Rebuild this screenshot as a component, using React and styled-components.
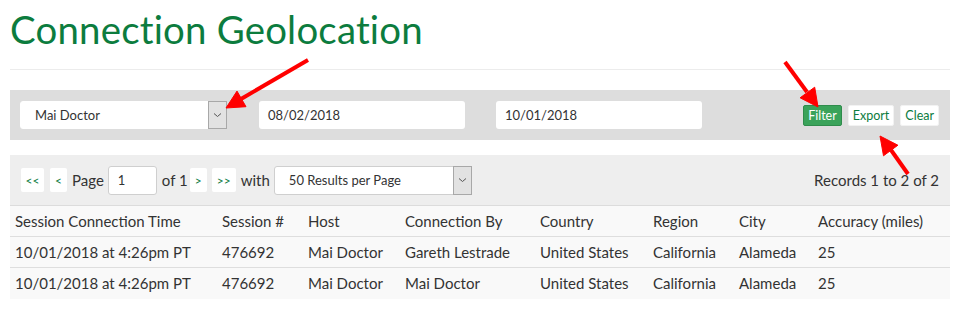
import React from "react";
import styled, { createGlobalStyle } from "styled-components";

const Global = createGlobalStyle`
  html, body { margin: 0; padding: 0; background: #fff; }
  body { font-family: Lato, "Open Sans", sans-serif; color: #333; }
`;

const Page = styled.div`
  position: relative;
  width: 965px;
  height: 319px;
  padding: 0 15px 0 10px;
  box-sizing: border-box;
`;

const Title = styled.h1`
  margin: 7px 0 0;
  font-family: Lato, sans-serif;
  font-weight: 400;
  font-size: 38.4px;
  line-height: 44px;
  color: #0c7c3e;
  letter-spacing: 0.2px;
`;

const Rule = styled.hr`
  margin: 18px 0 0;
  border: 0;
  border-top: 1px solid #ececec;
  height: 0;
`;

const FilterBar = styled.div`
  margin-top: 20px;
  height: 50px;
  background: #dddddd;
  display: flex;
  align-items: center;
  padding: 0 11px 0 10px;
  box-sizing: border-box;
`;

const SelectBox = styled.div`
  position: relative;
  display: flex;
  align-items: stretch;
  width: ${(p) => p.$w}px;
  height: ${(p) => p.$h}px;
  background: #fff;
  border: 1px solid ${(p) => p.$border || "#fff"};
  border-radius: 3px;
  box-sizing: border-box;
  font-size: 13px;
  color: #333;
`;

const SelectText = styled.div`
  flex: 1;
  display: flex;
  align-items: center;
  padding-left: ${(p) => p.$pad}px;
`;

const Caret = styled.div`
  width: 17px;
  background: #e2e2e2;
  border: 1px solid #a8a8a8;
  margin: -1px -1px -1px 0;
  display: flex;
  align-items: center;
  justify-content: center;
`;

const DateInput = styled.div`
  width: 206px;
  height: 28px;
  margin-left: ${(p) => p.$ml}px;
  background: #fff;
  border-radius: 3px;
  box-sizing: border-box;
  padding-left: 9px;
  display: flex;
  align-items: center;
  font-size: 13px;
  color: #333;
`;

const Buttons = styled.div`
  margin-left: auto;
  display: flex;
  gap: 6px;
`;

const Btn = styled.div`
  height: 21px;
  padding: 0 4px;
  box-sizing: border-box;
  display: flex;
  align-items: center;
  font-size: 12.5px;
  border-radius: 2px;
  background: ${(p) => (p.$primary ? "#3aa35a" : "#fff")};
  color: ${(p) => (p.$primary ? "#fff" : "#0c7c3e")};
  border: 1px solid ${(p) => (p.$primary ? "#2f8c4c" : "#f2f2f2")};
`;

const PagerBar = styled.div`
  margin-top: 15px;
  height: 51px;
  background: #eeeeee;
  border-bottom: 1px solid #dcdcdc;
  box-sizing: border-box;
  display: flex;
  align-items: center;
  padding: 0 11px 0 11px;
  font-size: 15px;
  color: #333;
`;

const PgBtn = styled.div`
  width: ${(p) => p.$w}px;
  height: 24px;
  background: #fff;
  border-radius: 2px;
  display: flex;
  align-items: center;
  justify-content: center;
  color: #0c7c3e;
  font-size: 12px;
  margin-left: ${(p) => p.$ml || 0}px;
`;

const Label = styled.span`
  margin: 0 ${(p) => p.$mr}px 0 ${(p) => p.$ml}px;
`;

const PageInput = styled.div`
  width: 49px;
  height: 29px;
  background: #fff;
  border: 1px solid #cfcfcf;
  border-radius: 3px;
  box-sizing: border-box;
  padding-left: 9px;
  display: flex;
  align-items: center;
  font-size: 13px;
`;

const Records = styled.div`
  margin-left: auto;
`;

const Table = styled.table`
  width: 940px;
  border-collapse: collapse;
  background: #f9f9f9;
  font-size: 15px;
  color: #333;
  table-layout: fixed;
`;

const Th = styled.th`
  text-align: left;
  font-weight: 400;
  height: 30px;
  padding: 0 0 0 5px;
  border-bottom: 1px solid #dedede;
  width: ${(p) => p.$w - 5}px;
`;

const Td = styled.td`
  height: 30px;
  padding: 0 0 0 5px;
  border-bottom: 1px solid ${(p) => (p.$last ? "transparent" : "#dedede")};
  white-space: nowrap;
`;

const Overlay = styled.svg`
  position: absolute;
  left: 0;
  top: 0;
  pointer-events: none;
`;

const CaretIcon = () => (
  <svg width="9" height="6" viewBox="0 0 9 6">
    <path d="M1 1.5 L4.5 4.5 L8 1.5" fill="none" stroke="#555" strokeWidth="1" />
  </svg>
);

const cols = [
  ["Session Connection Time", 207],
  ["Session #", 86],
  ["Host", 97],
  ["Connection By", 135],
  ["Country", 113],
  ["Region", 86],
  ["City", 79],
  ["Accuracy (miles)", 137],
];

const rows = [
  ["10/01/2018 at 4:26pm PT", "476692", "Mai Doctor", "Gareth Lestrade", "United States", "California", "Alameda", "25"],
  ["10/01/2018 at 4:26pm PT", "476692", "Mai Doctor", "Mai Doctor", "United States", "California", "Alameda", "25"],
];

const arrows = [
  { line: [308, 53, 241, 92], head: "226,101 246,99.7 237,84.1" },
  { line: [785, 55, 807, 85], head: "818,100 800.1,90.8 814.7,80.2" },
  { line: [908, 167, 891, 143], head: "880,129 897.9,138.2 883.5,148.8" },
];

export default function App() {
  return (
    <>
      <Global />
      <Page>
        <Title>Connection Geolocation</Title>
        <Rule />
        <FilterBar>
          <SelectBox $w={207} $h={28} $border="#fff">
            <SelectText $pad={14}>Mai Doctor</SelectText>
            <Caret>
              <CaretIcon />
            </Caret>
          </SelectBox>
          <DateInput $ml={32}>08/02/2018</DateInput>
          <DateInput $ml={31}>10/01/2018</DateInput>
          <Buttons>
            <Btn $primary>Filter</Btn>
            <Btn>Export</Btn>
            <Btn>Clear</Btn>
          </Buttons>
        </FilterBar>
        <PagerBar>
          <PgBtn $w={23}>&lt;&lt;</PgBtn>
          <PgBtn $w={17} $ml={6}>&lt;</PgBtn>
          <Label $ml={5} $mr={4}>Page</Label>
          <PageInput>1</PageInput>
          <Label $ml={5} $mr={2}>of 1</Label>
          <PgBtn $w={17}>&gt;</PgBtn>
          <PgBtn $w={24} $ml={5}>&gt;&gt;</PgBtn>
          <Label $ml={5} $mr={4}>with</Label>
          <SelectBox $w={198} $h={29} $border="#cfcfcf">
            <SelectText $pad={14}>50 Results per Page</SelectText>
            <Caret>
              <CaretIcon />
            </Caret>
          </SelectBox>
          <Records>Records 1 to 2 of 2</Records>
        </PagerBar>
        <Table>
          <thead>
            <tr>
              {cols.map(([c, w]) => (
                <Th key={c} $w={w}>{c}</Th>
              ))}
            </tr>
          </thead>
          <tbody>
            {rows.map((r, i) => (
              <tr key={i}>
                {r.map((v, j) => (
                  <Td key={j} $last={i === rows.length - 1}>{v}</Td>
                ))}
              </tr>
            ))}
          </tbody>
        </Table>
        <Overlay width="965" height="319" viewBox="0 0 965 319">
          {arrows.map((a, i) => (
            <g key={i} fill="#ff0000" stroke="#ff0000">
              <line x1={a.line[0]} y1={a.line[1]} x2={a.line[2]} y2={a.line[3]} strokeWidth="4" />
              <polygon points={a.head} strokeWidth="1" />
            </g>
          ))}
        </Overlay>
      </Page>
    </>
  );
}
